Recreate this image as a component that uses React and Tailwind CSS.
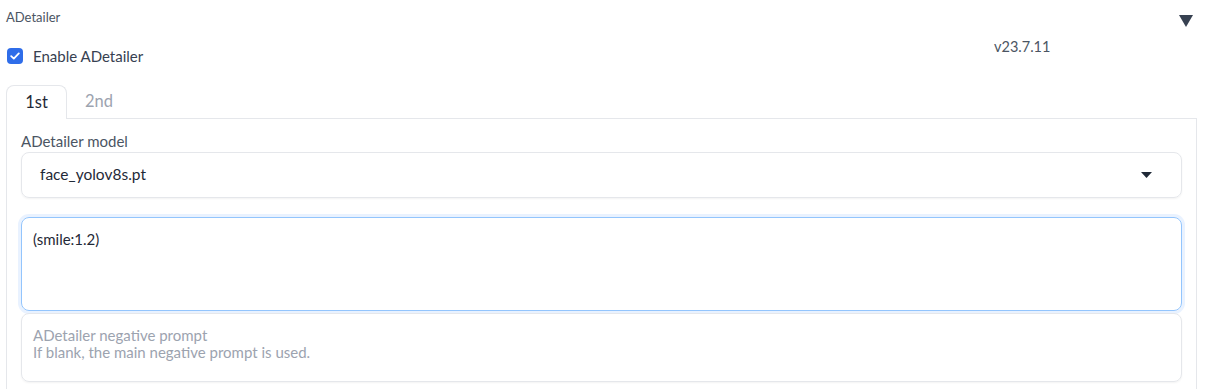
import React from "react";

export default function App() {
  return (
    <div className="w-[1205px] h-[389px] overflow-hidden bg-white text-[#374151]" style={{ fontFamily: "'Source Sans Pro', Lato, 'Noto Sans', sans-serif" }}>
      <div className="flex items-start justify-between pl-[6px] pr-[11px] pt-[9px]">
        <span className="text-[13px] leading-[17px] text-[#4b5563]">ADetailer</span>
        <svg width="16" height="14" viewBox="0 0 16 14" className="mt-[5px]">
          <path d="M1 1 L15 1 L8 13 Z" fill="#374151" />
        </svg>
      </div>
      <div className="flex items-center pl-[7px] mt-[18px]">
        <div className="flex flex-1 items-center gap-[10px]">
          <span className="w-[16px] h-[16px] rounded-[4px] bg-[#2f6de9] flex items-center justify-center">
            <svg width="10" height="8" viewBox="0 0 10 8">
              <path d="M1.2 4.2 L3.8 6.6 L8.8 1.4" stroke="white" strokeWidth="1.8" fill="none" strokeLinecap="round" strokeLinejoin="round" />
            </svg>
          </span>
          <span className="text-[15px] leading-[20px] text-[#374151]">Enable ADetailer</span>
        </div>
        <div className="w-[211px] text-[14.5px] leading-[20px] -mt-[18px] text-[#4b5563]">v23.7.11</div>
      </div>
      <div className="pl-[6px] pr-[8px] mt-[18px]">
        <div className="flex items-end">
          <div className="h-[34px] w-[61px] border border-b-0 border-[#e5e7eb] rounded-t-[8px] bg-white flex items-center justify-center text-[16.5px] text-[#1f2937] relative -mb-px z-10">1st</div>
          <div className="h-[34px] pl-[18px] flex items-center text-[16.5px] text-[#9ca3af]">2nd</div>
        </div>
        <div className="border border-[#e5e7eb] border-b-0 h-[280px] px-[14px] pt-[12px]">
          <div className="text-[15px] leading-[20px] text-[#4b5563]">ADetailer model</div>
          <div className="mt-[1px] h-[46px] border border-[#e5e7eb] rounded-[8px] shadow-[0_1px_2px_rgba(0,0,0,0.05)] flex items-center justify-between pl-[18px] pr-[29px]">
            <span className="text-[15.5px] text-[#1f2937]">face_yolov8s.pt</span>
            <svg width="11" height="6" viewBox="0 0 11 6">
              <path d="M0 0 L11 0 L5.5 6 Z" fill="#1f2937" />
            </svg>
          </div>
          <div className="mt-[19px] h-[94px] border border-[#93c5fd] rounded-[8px] shadow-[0_0_0_3px_rgba(191,219,254,0.35)] px-[11px] pt-[11px] text-[15px] leading-[20px] text-[#1f2937]">(smile:1.2)</div>
          <div className="mt-[2px] h-[69px] border border-[#e5e7eb] rounded-[8px] shadow-[0_1px_2px_rgba(0,0,0,0.05)] px-[11px] pt-[13px] text-[15px] leading-[17px] text-[#9ca3af]">
            <div>ADetailer negative prompt</div>
            <div>If blank, the main negative prompt is used.</div>
          </div>
        </div>
      </div>
    </div>
  );
}
